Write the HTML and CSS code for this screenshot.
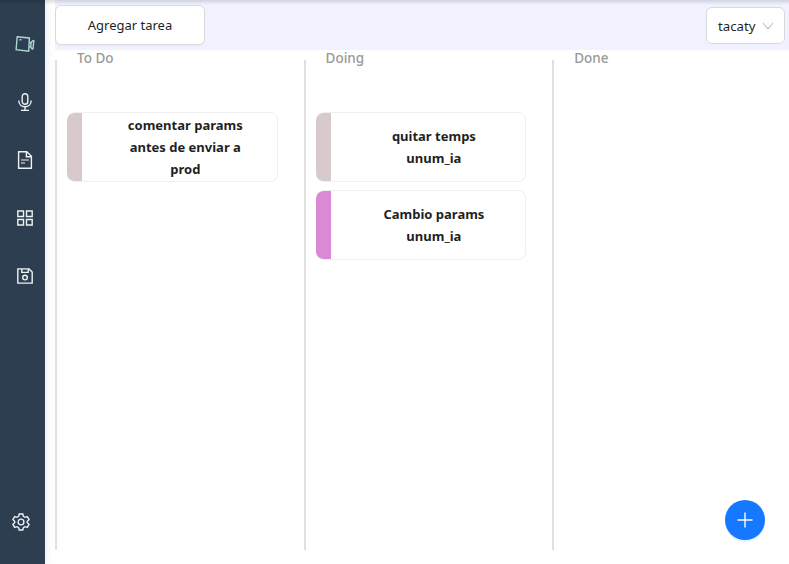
FILE: index.html
```html
<!DOCTYPE html>
<html lang="es">
<head>
<meta charset="utf-8">
<title>Tareas</title>
<link rel="stylesheet" href="styles.css">
</head>
<body>
<div class="app">
  <nav class="sidebar">
    <a class="nav-item active"><svg width="20" height="18" viewBox="0 0 20 18"><path d="M2.2 1.7 14.4 3 13.7 16.2 1.1 14.7ZM14.2 7.4l1.8.2 2-2 .8.2-.8 8-.9.1-1.6-2.2-1.8-.2M16.2 7.6l-.4 4.2M4.5 4.7h2"/></svg></a>
    <a class="nav-item"><svg width="16" height="20" viewBox="0 0 16 20"><rect x="5.2" y="1.7" width="5.6" height="10.6" rx="2.8"/><path d="M1.8 8.5c0 8.3 12.4 8.3 12.4 0M8 14.9v3.4M4 18.4h8"/></svg></a>
    <a class="nav-item"><svg width="16" height="20" viewBox="0 0 16 20"><path d="M1.6 1.7h8.2l4.6 4.6v12H1.6ZM9.4 1.7v5h5"/><path class="soft" d="M4 10h8M4 13h4"/></svg></a>
    <a class="nav-item"><svg width="16" height="16" viewBox="0 0 16 16"><path d="M.8 1h5.7v5.5H.8ZM9.5 1h5.7v5.5H9.5ZM.8 9.5h5.7V15H.8ZM9.5 9.5h5.7V15H9.5Z"/></svg></a>
    <a class="nav-item"><svg width="16" height="16" viewBox="0 0 16 16"><path d="M.8.9h11.3l3.1 3.2v11H.8ZM4.8.9v3.5h6.4V.9"/><circle cx="8" cy="9.6" r="2.3"/></svg></a>
    <a class="nav-item settings"><svg width="18" height="18" viewBox="0 0 18 18"><path d="M7.2 1h3.6l.6 2.4 1.6.9 2.3-.7 1.8 3.1-1.8 1.6v1.4l1.8 1.6-1.8 3.1-2.3-.7-1.6.9-.6 2.4H7.2l-.6-2.4-1.6-.9-2.3.7L.9 11.3l1.8-1.6V8.3L.9 6.7l1.8-3.1 2.3.7 1.6-.9Z"/><circle cx="9" cy="9" r="2.9"/></svg></a>
  </nav>
  <main class="content">
    <header class="toolbar">
      <button class="add-task">Agregar tarea</button>
      <button class="select"><span>tacaty</span><svg width="12" height="8" viewBox="0 0 12 8"><path d="M1 1 6 6.8 11 1"/></svg></button>
    </header>
    <section class="board">
      <div class="column">
        <h2>To Do</h2>
        <article class="card"><p>comentar params<br>antes de enviar a<br>prod</p></article>
      </div>
      <div class="column">
        <h2>Doing</h2>
        <article class="card"><p>quitar temps<br>unum_ia</p></article>
        <article class="card orchid"><p>Cambio params<br>unum_ia</p></article>
      </div>
      <div class="column">
        <h2>Done</h2>
      </div>
    </section>
  </main>
  <button class="fab" aria-label="Agregar"><svg width="16" height="16" viewBox="0 0 16 16"><path d="M8 .5v15M.5 8h15"/></svg></button>
</div>
</body>
</html>
```
FILE: styles.css
```css
* { box-sizing: border-box; }
body {
  margin: 0;
  background: #fff;
  font-family: "Noto Sans", "Open Sans", sans-serif;
  font-size: 13.5px;
  color: #1f1f1f;
}
button { font: inherit; color: inherit; }
svg { display: block; fill: none; stroke: currentColor; stroke-width: 1.4; }
.app { position: relative; display: flex; height: 564px; overflow: hidden; }
.app::before {
  content: "";
  position: absolute;
  z-index: 2;
  inset: 0 0 auto;
  height: 5px;
  background: linear-gradient(rgba(0, 0, 0, .13), rgba(0, 0, 0, 0));
}
.sidebar {
  flex: 0 0 45px;
  display: flex;
  flex-direction: column;
  padding: 15px 0 13px;
  background: #2d3e50;
  color: #edf2f4;
  box-shadow: 0 0 10px rgba(0, 0, 0, .1);
}
.nav-item {
  display: flex;
  align-items: center;
  justify-content: center;
  height: 58px;
  padding-left: 5px;
}
.active { color: #a9d8d3; }
.settings { margin-top: auto; padding: 0 3px 0 0; }
.soft { opacity: .65; }
.content { flex: 1; min-width: 0; padding-left: 10px; }
.toolbar {
  position: relative;
  display: flex;
  align-items: flex-start;
  justify-content: space-between;
  height: 50px;
  padding: 5px 4px 0 0;
  background: #f0f2ff;
}
.add-task, .select {
  background: #fff;
  border: 1px solid #d9d9d9;
  border-radius: 6px;
}
.add-task {
  width: 150px;
  height: 40px;
  padding: 0;
  font-size: 13px;
  box-shadow: 0 2px 0 rgba(0, 0, 0, .02);
}
.select {
  display: flex;
  align-items: center;
  justify-content: space-between;
  width: 79px;
  height: 37px;
  margin-top: 2px;
  padding: 0 10px 0 11px;
  font-size: 13.2px;
}
.select svg { color: #bfbfbf; stroke-width: 1.1; }
.board { display: flex; height: 490px; margin-top: 10px; }
.column {
  flex: 0 0 248.6px;
  padding: 0 26px 0 10px;
  border-left: 2px solid #e0e0e0;
}
.column h2 {
  height: 22px;
  margin: -13px 0 43px 10px;
  font-size: 13.5px;
  font-weight: 500;
  line-height: 22px;
  color: #999;
}
.card {
  display: flex;
  align-items: center;
  justify-content: center;
  height: 70px;
  margin-bottom: 8px;
  padding-left: 27px;
  border: 1px solid #f0f0f0;
  border-left: 0;
  border-radius: 8px;
  background: linear-gradient(90deg, #d8c9ca 15px, #fff 15px) border-box;
}
.orchid { background: linear-gradient(90deg, #da8ad4 15px, #fff 15px) border-box; }
.card p {
  margin: 0;
  font-size: 13px;
  font-weight: 700;
  line-height: 22px;
  text-align: center;
}
.fab {
  position: absolute;
  right: 24px;
  bottom: 24px;
  display: grid;
  place-items: center;
  width: 40px;
  height: 40px;
  padding: 0;
  border: 0;
  border-radius: 50%;
  background: #1677ff;
  color: #fff;
  box-shadow: 0 2px 0 rgba(5, 145, 255, .1);
}
```
